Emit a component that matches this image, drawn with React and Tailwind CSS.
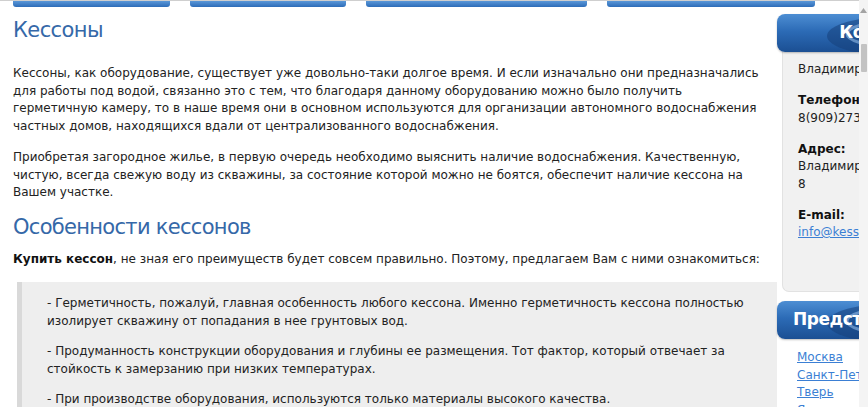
import React from "react";

const bodyFont = "font-['Tahoma','DejaVu_Sans',sans-serif]";

const navTabs = [
  { id: "t1", width: "w-[157px]" },
  { id: "t2", width: "w-[156px]" },
  { id: "t3", width: "w-[221px]" },
  { id: "t4", width: "w-[208px]" },
];

const cities = ["Москва", "Санкт-Петербург", "Тверь", "Ярославль", "Кострома"];

function BlockHeader({ title }) {
  return (
    <div className="relative h-[38px] w-[216px] overflow-hidden rounded-[8px] bg-[linear-gradient(180deg,#4d8ed3_0%,#2c6bb6_45%,#1b4f93_100%)] shadow-[0_1px_2px_rgba(0,0,0,0.25)]">
      {/* water ripple behind the title */}
      <svg className="absolute inset-0" width="216" height="38" viewBox="0 0 216 38">
        <ellipse cx="120" cy="22" rx="70" ry="20" fill="#16407a" opacity="0.55" />
        <ellipse cx="122" cy="20" rx="52" ry="13" fill="none" stroke="#9cc4ee" strokeWidth="3" opacity="0.55" />
        <ellipse cx="124" cy="19" rx="34" ry="8" fill="none" stroke="#c9def5" strokeWidth="2" opacity="0.5" />
        <ellipse cx="126" cy="18" rx="16" ry="4" fill="#e2eefa" opacity="0.35" />
      </svg>
      <div className="relative flex h-full items-center justify-center whitespace-nowrap text-[17px] font-bold tracking-[-0.5px] text-white">
        {title}
      </div>
    </div>
  );
}

export default function App() {
  return (
    <div className={`flex h-[407px] w-[868px] overflow-hidden bg-white text-[#222] ${bodyFont}`}>
      <div className="flex min-w-0 flex-1 flex-col overflow-hidden border-t border-[#cfcfcf]">
        {/* top menu tabs */}
        <div className="flex gap-[20px] pl-[13px]">
          {navTabs.map((tab) => (
            <div
              key={tab.id}
              className={`${tab.width} h-[6px] shrink-0 rounded-b-[3px] bg-[linear-gradient(180deg,#5a97d8,#2d6cb8)]`}
            />
          ))}
        </div>

        <div className="flex">
          {/* article */}
          <div className="w-[777px] shrink-0 pl-[13px] text-[12px] leading-[17.5px]">
            <h1 className="mt-[9px] text-[21px] leading-[28px] font-normal tracking-[-0.6px] text-[#3568a8]">Кессоны</h1>
            <p className="mt-[21px] pr-[11px]">
              Кессоны, как оборудование, существует уже довольно-таки долгое время. И если изначально они предназначались
              для работы под водой, связанно это с тем, что благодаря данному оборудованию можно было получить
              герметичную камеру, то в наше время они в основном используются для организации автономного водоснабжения
              частных домов, находящихся вдали от централизованного водоснабжения.
            </p>
            <p className="mt-[14px] pr-[11px]">
              Приобретая загородное жилье, в первую очередь необходимо выяснить наличие водоснабжения. Качественную,
              чистую, всегда свежую воду из скважины, за состояние которой можно не боятся, обеспечит наличие кессона на
              Вашем участке.
            </p>
            <h2 className="mt-[11px] text-[21px] leading-[28px] font-normal tracking-[-0.7px] text-[#3568a8]">
              Особенности кессонов
            </h2>
            <p className="mt-[10px] pr-[11px]">
              <strong className="font-bold text-[#111]">Купить кессон</strong>, не зная его преимуществ будет совсем
              правильно. Поэтому, предлагаем Вам с ними ознакомиться:
            </p>
            <blockquote className="ml-[4px] mt-[14px] border-l-[5px] border-[#d9d9d9] bg-[#eeeeee] pb-[14px] pl-[25px] pr-[24px] pt-[13px]">
              <p>
                - Герметичность, пожалуй, главная особенность любого кессона. Именно герметичность кессона полностью
                изолирует скважину от попадания в нее грунтовых вод.
              </p>
              <p className="mt-[13px]">
                - Продуманность конструкции оборудования и глубины ее размещения. Тот фактор, который отвечает за
                стойкость к замерзанию при низких температурах.
              </p>
              <p className="mt-[13px]">- При производстве оборудования, используются только материалы высокого качества.</p>
            </blockquote>
          </div>

          {/* sidebar */}
          <aside className="w-[216px] shrink-0 text-[12px] leading-[17.5px]">
            <div className="mt-[7px]">
              <BlockHeader title="Контакты" />
            </div>
            <div className="ml-[5px] h-[240px] rounded-bl-[7px] border-b border-l border-[#e2e2e2] bg-[#f1f1f1] pl-[15px] pt-[9px]">
              <p>Владимир</p>
              <p className="mt-[13.5px]">
                <b className="font-bold text-[#111]">Телефон:</b>
                <br />
                8(909)273-00-00
              </p>
              <p className="mt-[13.5px]">
                <b className="font-bold text-[#111]">Адрес:</b>
                <br />
                Владимир
                <br />8
              </p>
              <p className="mt-[13.5px]">
                <b className="font-bold text-[#111]">E-mail:</b>
                <br />
                <a href="#" className="text-[#3b7fd4] underline">
                  info@kesson.ru
                </a>
              </p>
            </div>
            <div className="mt-[9px]">
              <BlockHeader title="Представительства" />
            </div>
            <ul className="ml-[5px] mt-[10px] pl-[15px]">
              {cities.map((city) => (
                <li key={city}>
                  <a href="#" className="text-[#3b7fd4] underline">
                    {city}
                  </a>
                </li>
              ))}
            </ul>
          </aside>
        </div>
      </div>

      {/* page scrollbar */}
      <div className="flex w-[9px] shrink-0 flex-col items-center bg-[#f4f4f4]">
        <svg className="mt-[8px]" width="7" height="5" viewBox="0 0 7 5">
          <path d="M0 5 L3.5 0 L7 5 Z" fill="#a3a3a3" />
        </svg>
        <div className="mt-[31px] h-[28px] w-[6px] rounded-[1px] bg-[#c3c3c3]" />
      </div>
    </div>
  );
}
